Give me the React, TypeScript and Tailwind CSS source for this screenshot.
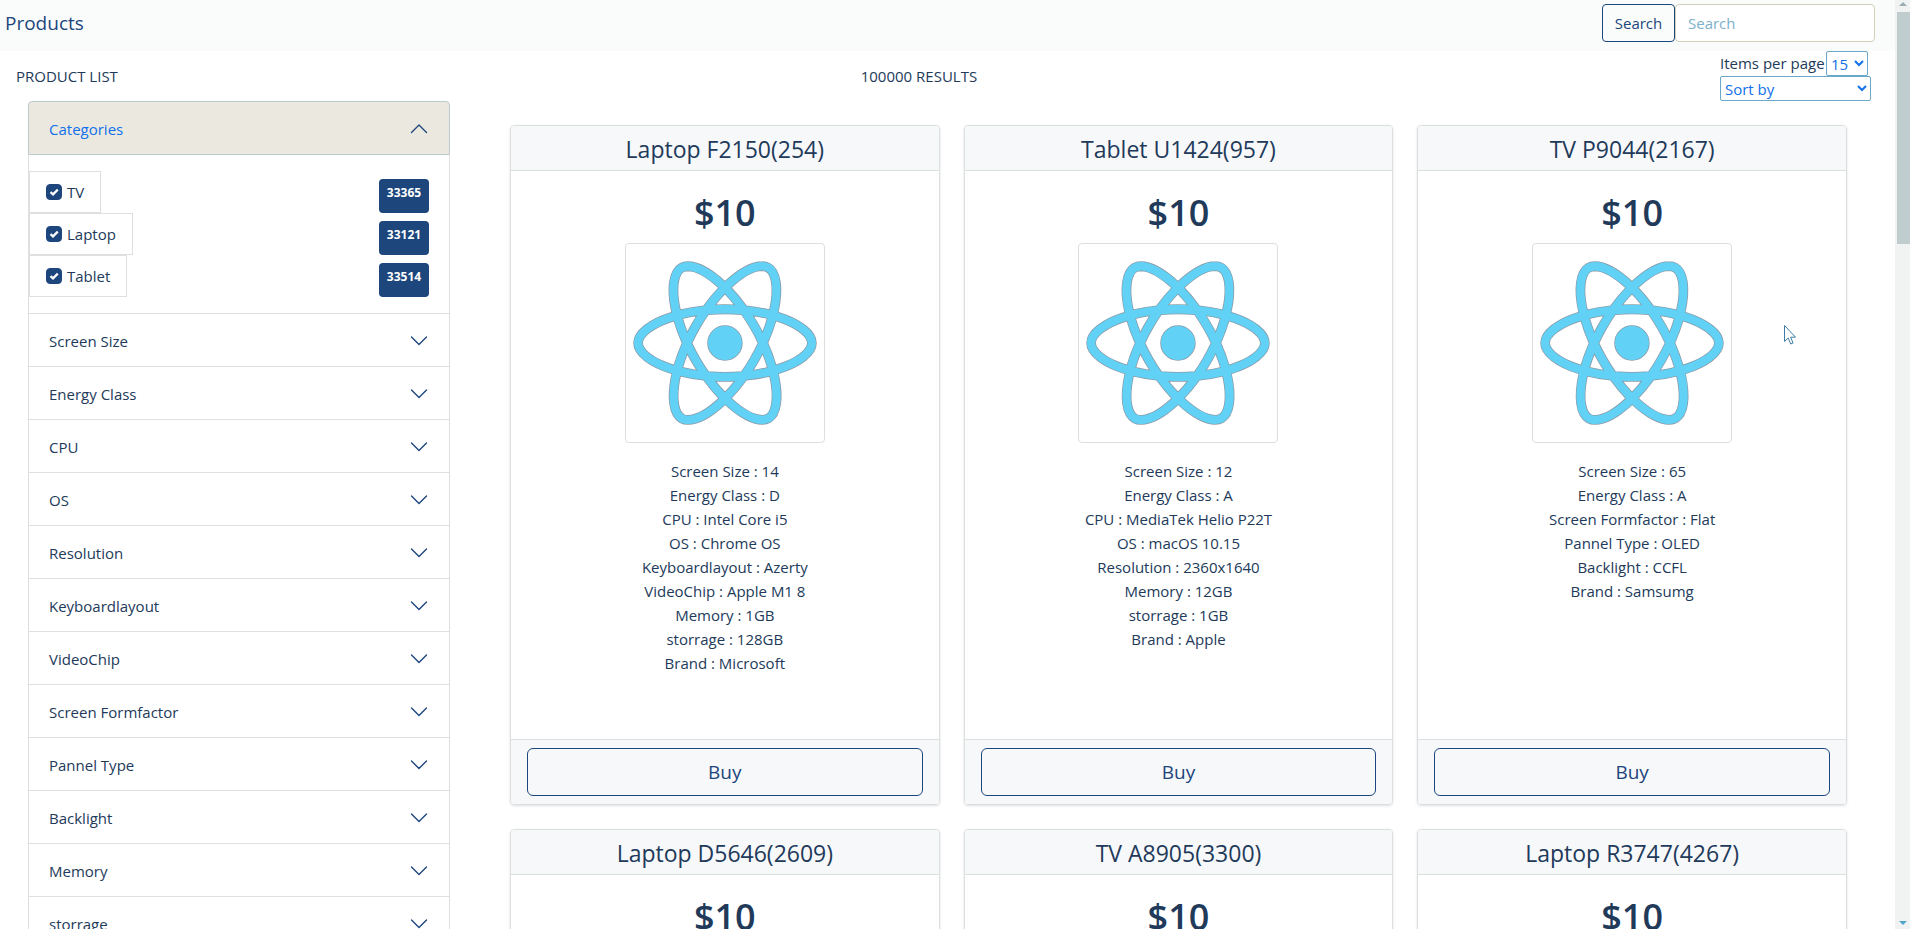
import React, { useState } from "react";
import { SiReact } from "react-icons/si";

const FILTERS = [
  "Screen Size",
  "Energy Class",
  "CPU",
  "OS",
  "Resolution",
  "Keyboardlayout",
  "VideoChip",
  "Screen Formfactor",
  "Pannel Type",
  "Backlight",
  "Memory",
  "storrage",
];

const CATEGORIES = [
  { name: "TV", count: 33365 },
  { name: "Laptop", count: 33121 },
  { name: "Tablet", count: 33514 },
];

type Product = { title: string; price: string; specs: string[] };

const PRODUCTS: Product[] = [
  {
    title: "Laptop F2150(254)",
    price: "$10",
    specs: [
      "Screen Size : 14",
      "Energy Class : D",
      "CPU : Intel Core i5",
      "OS : Chrome OS",
      "Keyboardlayout : Azerty",
      "VideoChip : Apple M1 8",
      "Memory : 1GB",
      "storrage : 128GB",
      "Brand : Microsoft",
    ],
  },
  {
    title: "Tablet U1424(957)",
    price: "$10",
    specs: [
      "Screen Size : 12",
      "Energy Class : A",
      "CPU : MediaTek Helio P22T",
      "OS : macOS 10.15",
      "Resolution : 2360x1640",
      "Memory : 12GB",
      "storrage : 1GB",
      "Brand : Apple",
    ],
  },
  {
    title: "TV P9044(2167)",
    price: "$10",
    specs: [
      "Screen Size : 65",
      "Energy Class : A",
      "Screen Formfactor : Flat",
      "Pannel Type : OLED",
      "Backlight : CCFL",
      "Brand : Samsumg",
    ],
  },
  { title: "Laptop D5646(2609)", price: "$10", specs: [] },
  { title: "TV A8905(3300)", price: "$10", specs: [] },
  { title: "Laptop R3747(4267)", price: "$10", specs: [] },
];

function Chevron({ up = false }: { up?: boolean }) {
  return (
    <svg viewBox="0 0 20 20" className="size-5 shrink-0" fill="none" stroke="#1d467c" strokeWidth="1.4" strokeLinecap="round" strokeLinejoin="round" aria-hidden="true">
      <path d={up ? "M2.5 13.5 10 6l7.5 7.5" : "M2.5 6 10 13.5 17.5 6"} />
    </svg>
  );
}

function CategoryRow({ name, count }: { name: string; count: number }) {
  const [checked, setChecked] = useState(true);
  return (
    <li className="flex items-end justify-between pr-5">
      <label className="flex h-[42px] items-center gap-[5px] border border-[#dfdfdf] px-4">
        <span className="grid size-4">
          <input
            type="checkbox"
            checked={checked}
            onChange={() => setChecked(!checked)}
            className="col-start-1 row-start-1 size-4 appearance-none rounded border border-[#1d467c] checked:bg-[#1d467c]"
          />
          {checked && (
            <svg viewBox="0 0 16 16" className="pointer-events-none col-start-1 row-start-1 size-4" fill="none" stroke="#fff" strokeWidth="2.2" aria-hidden="true">
              <path d="M4.5 8.2 7 10.4 11.8 5.6" />
            </svg>
          )}
        </span>
        {name}
      </label>
      <span className="h-[34px] w-[50px] rounded bg-[#1d467c] text-center text-xs leading-7 font-bold text-white">{count}</span>
    </li>
  );
}

function Sidebar() {
  return (
    <aside className="w-[422px] shrink-0">
      <button
        type="button"
        className="flex h-[54px] w-full items-center justify-between rounded-t border border-[#bccbcd] bg-[#ebe8e0] px-5 pt-0.5 text-[#1170ea]"
      >
        Categories
        <Chevron up />
      </button>
      <div className="border-x border-[#dfdfdf]">
        <ul className="py-4">
          {CATEGORIES.map((c) => (
            <CategoryRow key={c.name} {...c} />
          ))}
        </ul>
        {FILTERS.map((f) => (
          <button key={f} type="button" className="flex h-[53px] w-full items-center justify-between border-t border-[#dfdfdf] px-5 pt-0.5">
            {f}
            <Chevron />
          </button>
        ))}
      </div>
    </aside>
  );
}

function ProductCard({ title, price, specs }: Product) {
  return (
    <article className="flex min-h-[680px] flex-col overflow-hidden rounded border border-[#dcdfe0] text-center shadow-sm">
      <header className="border-b border-[#dcdfe0] bg-[#f7f8fa] pt-[9px] pb-[7px]">
        <h2 className="text-[23px] leading-[28px]">{title}</h2>
      </header>
      <div className="flex grow flex-col items-center py-4">
        <p className="pt-0.5 text-[36px] leading-[48px] font-semibold">{price}</p>
        <div className="mt-1.5 flex size-[200px] items-center justify-center rounded border border-[#dcdfe0]">
          <SiReact
            className="size-[182px] overflow-visible fill-[#61d2f5] stroke-[#8a9aa8] [paint-order:stroke] [stroke-width:0.2]"
            aria-hidden="true"
          />
        </div>
        <ul className="mt-4 leading-6">
          {specs.map((s) => (
            <li key={s}>{s}</li>
          ))}
        </ul>
      </div>
      <footer className="border-t border-[#dcdfe0] bg-[#f7f8fa] px-4 py-2">
        <button type="button" className="h-12 w-full rounded-md border border-[#1d467c] text-[19px] text-[#1d467c]">
          Buy
        </button>
      </footer>
    </article>
  );
}

function Scrollbar() {
  return (
    <div className="flex w-[15px] shrink-0 flex-col items-center bg-[#f1f3f2]" aria-hidden="true">
      <svg viewBox="0 0 15 12" className="h-3 w-[15px] shrink-0">
        <path d="M4 6h8L8 2z" fill="#9aafb5" />
      </svg>
      <div className="h-1/4 w-full pl-[2px]">
        <div className="h-full bg-[#bfcdcf]" />
      </div>
      <svg viewBox="0 0 15 12" className="mt-auto h-3 w-[15px] shrink-0">
        <path d="M4 4h8L8 8z" fill="#4fa5cb" />
      </svg>
    </div>
  );
}

export default function App() {
  return (
    <div className="relative flex h-screen overflow-hidden bg-white font-['Open_Sans','Noto_Sans',sans-serif] text-[15px] leading-6 text-[#223a5a]">
      <div className="min-w-0 grow overflow-hidden">
        <nav className="flex h-[51px] items-center justify-between bg-[#fafcfb] pr-5 pb-[5px] pl-[5px]">
          <a href="#products" className="text-[19px] text-[#1d467c]">
            Products
          </a>
          <form className="flex" onSubmit={(e) => e.preventDefault()}>
            <button type="submit" className="h-[38px] w-[73px] rounded border border-[#1d467c] text-[#1d467c]">
              Search
            </button>
            <input
              type="search"
              placeholder="Search"
              aria-label="Search products"
              className="h-[38px] w-[200px] rounded border border-[#d2cfba] bg-white px-3 placeholder:text-[#7dafc9]"
            />
          </form>
        </nav>

        <div className="flex h-[50px] items-center justify-between pr-6 pl-4">
          <h1>PRODUCT LIST</h1>
          <p>100000 RESULTS</p>
          <div className="w-[151px]">
            <div className="flex">
              <label htmlFor="per-page" className="w-[106px] whitespace-nowrap">
                Items per page
              </label>
              <select id="per-page" className="h-[25px] w-[42px] rounded-xs border border-[#69a8c8] text-[#1170ea]">
                <option>15</option>
                <option>30</option>
              </select>
            </div>
            <select aria-label="Sort by" className="block h-[25px] w-full rounded-xs border border-[#69a8c8] text-[#1170ea]">
              <option>Sort by</option>
              <option>Price</option>
            </select>
          </div>
        </div>

        <main className="flex items-start gap-[60px] pr-12 pl-7">
          <Sidebar />
          <section className="mt-6 grid grow grid-cols-3 gap-6">
            {PRODUCTS.map((p) => (
              <ProductCard key={p.title} {...p} />
            ))}
          </section>
        </main>
      </div>
      <Scrollbar />
      <svg viewBox="0 0 12 20" className="absolute top-[325px] left-[1784px] h-5 w-3" fill="#fff" stroke="#3f7da8" strokeWidth="1" aria-hidden="true">
        <path d="M.5.5v16l3.7-3.5 2.5 6 2.4-1-2.5-5.8h4.9z" />
      </svg>
    </div>
  );
}
